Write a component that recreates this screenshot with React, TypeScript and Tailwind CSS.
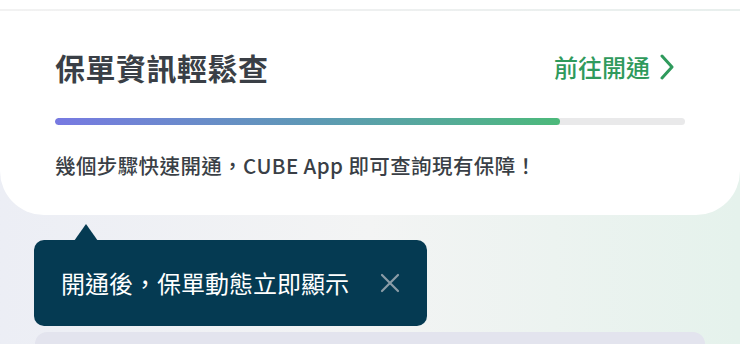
import React from "react";

export default function App() {
  const font = { fontFamily: '"Noto Sans CJK TC", "Noto Sans", sans-serif' };
  return (
    <div
      className="relative w-[740px] h-[344px] overflow-hidden bg-gradient-to-r from-[#eceef5] via-[#f3f4f4] to-[#e5f2ec]"
      style={font}
    >
      <div className="h-[9px] bg-white" />
      <div className="h-[2px] bg-gradient-to-r from-[#f2f2f2] via-[#eef0f0] to-[#e8efed]" />
      <div className="bg-white rounded-b-[44px] h-[204px] px-[55px] pt-[34px] flex flex-col">
        <div className="flex items-center justify-between h-[44px]">
          <div className="text-[30px] leading-none font-bold text-[#3a3f46] tracking-[0.5px]">
            保單資訊輕鬆查
          </div>
          <div className="flex items-center gap-[8px] mr-[9px] text-[#2f9a5c]">
            <span className="text-[24px] leading-none font-medium">前往開通</span>
            <svg width="18" height="26" viewBox="0 0 18 26" fill="none">
              <path d="M4 2 L14 13 L4 24" stroke="#2f9a5c" strokeWidth="3" strokeLinecap="round" strokeLinejoin="round" />
            </svg>
          </div>
        </div>
        <div className="mt-[29px] h-[7px] w-[630px] rounded-full bg-[#e9e9ea] overflow-hidden">
          <div className="h-full w-[505px] rounded-full bg-gradient-to-r from-[#7779e2] via-[#5e98b6] to-[#4cb97a]" />
        </div>
        <div className="mt-[30px] text-[20.5px] leading-none font-medium text-[#3a3f46] tracking-[0.4px]">
          幾個步驟快速開通，CUBE App 即可查詢現有保障！
        </div>
      </div>
      <div className="relative mt-[25px] ml-[34px] w-[393px] h-[86px] bg-[#053a52] rounded-[10px] flex items-center pl-[27px]">
        <div className="absolute left-[40px] -top-[16px] w-0 h-0 border-l-[12px] border-r-[12px] border-b-[17px] border-l-transparent border-r-transparent border-b-[#053a52]" />
        <span className="text-[24px] leading-none text-white">開通後，保單動態立即顯示</span>
        <svg className="ml-[31px]" width="20" height="20" viewBox="0 0 20 20" fill="none">
          <path d="M2 2 L18 18 M18 2 L2 18" stroke="#8b9ca7" strokeWidth="2.2" strokeLinecap="round" />
        </svg>
      </div>
      <div className="mt-[6px] mx-[35px] h-[40px] rounded-t-[12px] bg-[#e3e4ee]" />
    </div>
  );
}
